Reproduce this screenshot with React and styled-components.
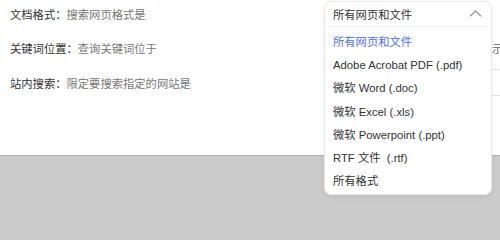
import React from 'react';
import styled, { createGlobalStyle } from 'styled-components';

const GlobalStyle = createGlobalStyle`
  html, body {
    margin: 0;
    padding: 0;
    height: 203px;
    overflow: hidden;
    background: #cbcbcb;
  }
  body {
    font-family: "Liberation Sans", "Noto Sans CJK SC", sans-serif;
    font-size: 11.3px;
    color: #333;
  }
  #root {
    height: 100%;
  }
`;

const formats = [
  'Adobe Acrobat PDF (.pdf)',
  '微软 Word (.doc)',
  '微软 Excel (.xls)',
  '微软 Powerpoint (.ppt)',
  'RTF 文件 \u00a0(.rtf)',
  '所有格式',
];

const App = () => {
  return (
    <>
      <GlobalStyle />
      <Page>
        <Panel>
          <Row>
            <Label>
              文档格式：<Hint>搜索网页格式是</Hint>
            </Label>
            <Cell>
              <Dropdown>
                <Trigger>
                  <span>所有网页和文件</span>
                  <svg width="13" height="7" viewBox="0 0 13 7" fill="none">
                    <path d="M1 6.2 L6.5 1 L12 6.2" stroke="#9a9a9a" strokeWidth="1.3" />
                  </svg>
                </Trigger>
                <Options>
                  <Option $active>所有网页和文件</Option>
                  {formats.map((f) => (
                    <Option key={f}>{f}</Option>
                  ))}
                </Options>
              </Dropdown>
            </Cell>
          </Row>
          <Row>
            <Label>
              关键词位置：<Hint>查询关键词位于</Hint>
            </Label>
            <Cell>
              <Field />
              <Trailing>示</Trailing>
            </Cell>
          </Row>
          <Row>
            <Label>
              站内搜索：<Hint>限定要搜索指定的网站是</Hint>
            </Label>
            <Cell>
              <Field $wide />
            </Cell>
          </Row>
        </Panel>
        <Backdrop />
      </Page>
    </>
  );
};

const Page = styled.div`
  display: flex;
  flex-direction: column;
  height: 100%;
`;

const Panel = styled.div`
  height: 155px;
  background: #fff;
  display: flex;
  flex-direction: column;
  gap: 7.5px;
  box-shadow: 0 1px 1px rgba(0, 0, 0, 0.12);
  position: relative;
  z-index: 1;
`;

const Backdrop = styled.div`
  flex: 1;
  background: #cbcbcb;
`;

const Row = styled.div`
  display: flex;
  align-items: center;
  height: 27px;
`;

const Label = styled.div`
  width: 314px;
  padding-left: 10px;
  color: #333;
  white-space: nowrap;
`;

const Hint = styled.span`
  color: #777;
`;

const Cell = styled.div`
  position: relative;
  display: flex;
  align-items: center;
  height: 100%;
  width: 176px;
`;

const Field = styled.div`
  flex: none;
  box-sizing: border-box;
  width: ${(p) => (p.$wide ? '240px' : '167px')};
  height: 27px;
  border: 1px solid #e3e3e3;
  border-radius: 4px;
`;

const Trailing = styled.span`
  margin-left: 1px;
  color: #666;
  white-space: nowrap;
`;

const Dropdown = styled.div`
  position: absolute;
  top: 1px;
  left: 0;
  z-index: 5;
  box-sizing: border-box;
  width: 168px;
  background: #fff;
  border: 1px solid #e8e8e8;
  border-radius: 7px;
  box-shadow: 0 2px 6px rgba(0, 0, 0, 0.06);
  padding-bottom: 1px;
`;

const Trigger = styled.div`
  display: flex;
  align-items: center;
  justify-content: space-between;
  height: 24px;
  margin: 0 3px;
  padding: 0 6px 0 5px;
  border-bottom: 1px solid #f0f0f0;
  color: #333;

  svg {
    margin-top: -2px;
  }
`;

const Options = styled.div`
  display: flex;
  flex-direction: column;
  padding-top: 4px;
`;

const Option = styled.div`
  height: 23.2px;
  line-height: 23.2px;
  padding-left: 8px;
  color: ${(p) => (p.$active ? '#4e6ef2' : '#333')};
  white-space: nowrap;
`;

export default App;
